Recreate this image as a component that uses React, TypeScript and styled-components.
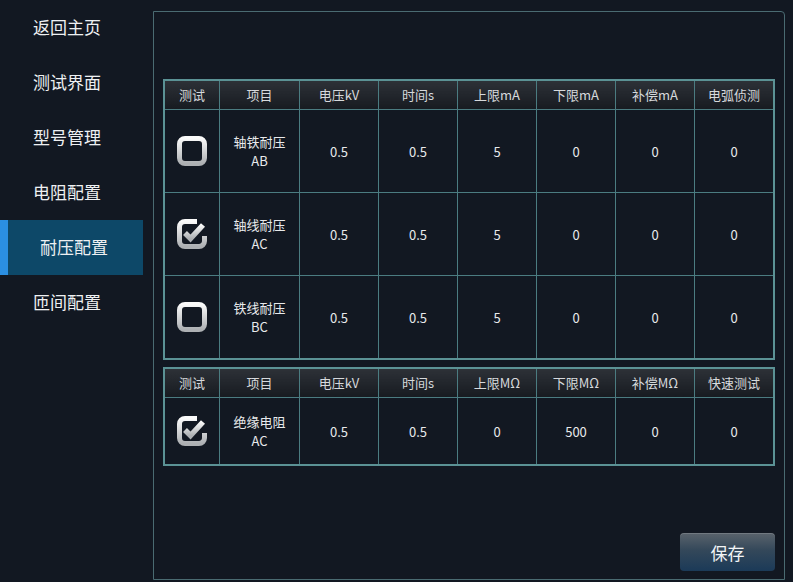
import styled, { createGlobalStyle } from 'styled-components';

const GlobalStyle = createGlobalStyle`
  html, body {
    margin: 0;
    padding: 0;
    background: #121822;
  }
  body {
    font-family: "Noto Sans CJK SC", "Noto Sans", sans-serif;
    color: #e6e8ea;
  }
`;

const Page = styled.div`
  display: flex;
  width: 793px;
  height: 582px;
  overflow: hidden;
  background: #121822;
`;

const Sidebar = styled.nav`
  width: 143px;
  flex-shrink: 0;
  display: flex;
  flex-direction: column;
`;

const NavItem = styled.div<{ $active?: boolean }>`
  height: 55px;
  display: flex;
  align-items: center;
  box-sizing: border-box;
  padding-left: ${(p) => (p.$active ? '32px' : '33px')};
  padding-bottom: 3px;
  font-size: 17px;
  color: #eef0f2;
  background: ${(p) => (p.$active ? '#0d4868' : 'transparent')};
  border-left: ${(p) => (p.$active ? '8px solid #2b8fe2' : 'none')};
`;

const Panel = styled.main`
  flex: 1;
  margin: 11px 10px 2px 10px;
  border: 1px solid #4a6b72;
  border-radius: 0 4px 0 0;
  padding: 67px 9px 8px 9px;
  display: flex;
  flex-direction: column;
  gap: 7px;
`;

const Table = styled.table`
  width: 610px;
  border-collapse: collapse;
  border: 2px solid #5b9295;
  table-layout: fixed;
`;

const HeadCell = styled.th<{ $w?: number }>`
  width: ${(p) => p.$w ?? 78}px;
  height: 27px;
  padding: 0 0 1px;
  font-weight: 400;
  font-size: 13px;
  color: #d6d9dc;
  border: 1px solid #4b7c81;
  background: linear-gradient(#2d3137, #171b21);
`;

const Cell = styled.td<{ $h: number }>`
  height: ${(p) => p.$h}px;
  padding: 0;
  text-align: center;
  font-size: 13px;
  line-height: 19px;
  color: #e8eaec;
  border: 1px solid #4b7c81;
`;

const Footer = styled.div`
  margin-top: auto;
  display: flex;
  justify-content: flex-end;
`;

const SaveButton = styled.button`
  width: 95px;
  height: 38px;
  border: none;
  border-radius: 4px;
  font-family: "Noto Sans CJK SC", sans-serif;
  font-size: 17px;
  color: #f2f4f6;
  background: linear-gradient(#5a636c 0%, #34485a 45%, #1b3a58 100%);
  box-shadow: inset 0 1px 0 rgba(255, 255, 255, 0.15);
`;

function CheckBox({ checked }: { checked: boolean }) {
  return (
    <svg width="32" height="32" viewBox="0 0 32 32" style={{ display: 'block', margin: '0 auto' }}>
      <defs>
        <linearGradient id="cbg" x1="0" y1="0" x2="0" y2="1">
          <stop offset="0" stopColor="#fafafa" />
          <stop offset="1" stopColor="#adb0b3" />
        </linearGradient>
      </defs>
      {checked ? (
        <>
          <path
            d="M21 3.5 H9 A5.5 5.5 0 0 0 3.5 9 V23 A5.5 5.5 0 0 0 9 28.5 H23 A5.5 5.5 0 0 0 28.5 23 V18"
            fill="none"
            stroke="url(#cbg)"
            strokeWidth="5"
          />
          <path d="M9 15 L14.5 20.5 L27 7" fill="none" stroke="url(#cbg)" strokeWidth="5.5" strokeLinejoin="miter" />
        </>
      ) : (
        <rect x="3.5" y="3.5" width="25" height="25" rx="5.5" fill="none" stroke="url(#cbg)" strokeWidth="5" />
      )}
    </svg>
  );
}

const withstand = [
  { on: false, name: '轴铁耐压', code: 'AB' },
  { on: true, name: '轴线耐压', code: 'AC' },
  { on: false, name: '铁线耐压', code: 'BC' },
];

const headA = ['电压kV', '时间s', '上限mA', '下限mA', '补偿mA', '电弧侦测'];
const headB = ['电压kV', '时间s', '上限MΩ', '下限MΩ', '补偿MΩ', '快速测试'];

export default function App() {
  const nav = ['返回主页', '测试界面', '型号管理', '电阻配置', '耐压配置', '匝间配置'];
  return (
    <>
      <GlobalStyle />
      <Page>
        <Sidebar>
          {nav.map((n) => (
            <NavItem key={n} $active={n === '耐压配置'}>
              {n}
            </NavItem>
          ))}
        </Sidebar>
        <Panel>
          <Table>
            <thead>
              <tr>
                <HeadCell $w={54}>测试</HeadCell>
                <HeadCell $w={79}>项目</HeadCell>
                {headA.map((h) => (
                  <HeadCell key={h}>{h}</HeadCell>
                ))}
              </tr>
            </thead>
            <tbody>
              {withstand.map((r) => (
                <tr key={r.code}>
                  <Cell $h={82}>
                    <CheckBox checked={r.on} />
                  </Cell>
                  <Cell $h={82}>
                    {r.name}
                    <br />
                    {r.code}
                  </Cell>
                  <Cell $h={82}>0.5</Cell>
                  <Cell $h={82}>0.5</Cell>
                  <Cell $h={82}>5</Cell>
                  <Cell $h={82}>0</Cell>
                  <Cell $h={82}>0</Cell>
                  <Cell $h={82}>0</Cell>
                </tr>
              ))}
            </tbody>
          </Table>
          <Table>
            <thead>
              <tr>
                <HeadCell $w={54}>测试</HeadCell>
                <HeadCell $w={79}>项目</HeadCell>
                {headB.map((h) => (
                  <HeadCell key={h}>{h}</HeadCell>
                ))}
              </tr>
            </thead>
            <tbody>
              <tr>
                <Cell $h={66}>
                  <CheckBox checked />
                </Cell>
                <Cell $h={66}>
                  绝缘电阻
                  <br />
                  AC
                </Cell>
                <Cell $h={66}>0.5</Cell>
                <Cell $h={66}>0.5</Cell>
                <Cell $h={66}>0</Cell>
                <Cell $h={66}>500</Cell>
                <Cell $h={66}>0</Cell>
                <Cell $h={66}>0</Cell>
              </tr>
            </tbody>
          </Table>
          <Footer>
            <SaveButton>保存</SaveButton>
          </Footer>
        </Panel>
      </Page>
    </>
  );
}
